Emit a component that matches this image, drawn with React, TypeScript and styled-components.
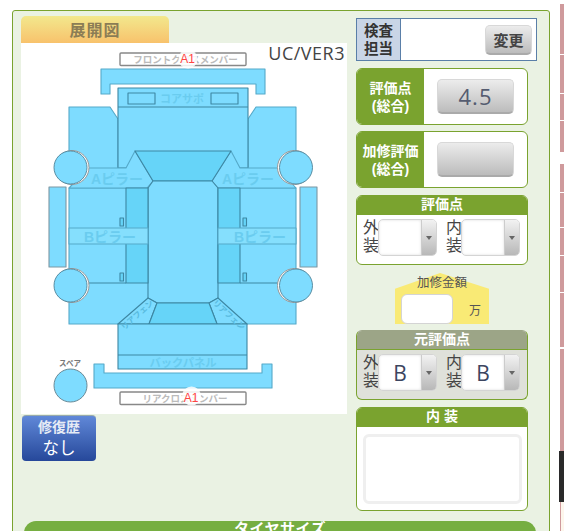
import React from 'react';
import styled, { createGlobalStyle } from 'styled-components';

const green = '#7aa32f';
const FONT = '"Liberation Sans", "Noto Sans CJK JP", sans-serif';

const GlobalStyle = createGlobalStyle`
  html, body {
    margin: 0;
    padding: 0;
    background: #fff;
    height: 531px;
    overflow: hidden;
    font-family: ${FONT};
  }
`;

const Page = styled.div`
  display: flex;
  align-items: flex-start;
  width: 564px;
  height: 531px;
  overflow: hidden;
  padding: 10px 0 0 12px;
  box-sizing: border-box;
`;

const Panel = styled.div`
  width: 538px;
  height: 560px;
  flex: none;
  box-sizing: border-box;
  border: 1px solid ${green};
  border-radius: 3px;
  background: #eaf2e3;
  padding: 5px 8px 0 8px;
`;

const Columns = styled.div`
  display: flex;
  gap: 9px;
`;

const LeftCol = styled.div`
  width: 326px;
  flex: none;
`;

const RightCol = styled.div`
  width: 172px;
  flex: none;
  display: flex;
  flex-direction: column;
  padding-top: 2px;
`;

const Tab = styled.div`
  width: 148px;
  height: 27px;
  border-radius: 5px 5px 0 0;
  background: linear-gradient(#f2e88d, #f8c26c);
  color: #8b7d55;
  font-weight: bold;
  font-size: 16px;
  letter-spacing: 1px;
  text-align: center;
  line-height: 29px;
`;

const Diagram = styled.div`
  position: relative;
  width: 326px;
  height: 371px;
  background: #fff;
`;

const Version = styled.span`
  position: absolute;
  top: 0;
  right: 2px;
  font-family: "Open Sans", sans-serif;
  font-size: 18px;
  letter-spacing: 0.5px;
  line-height: 20px;
  color: #444;
`;

const RepairButton = styled.div`
  width: 74px;
  height: 46px;
  margin: 1px 0 0 1px;
  border-radius: 4px;
  border-top: 1px solid #9aa;
  box-sizing: border-box;
  background: linear-gradient(#6088d8, #26489a);
  color: #fff;
  text-align: center;
  font-size: 16.5px;
  line-height: 20px;
  b { display: block; font-size: 14px; line-height: 22px; color: #e6ebf5; }
`;

const Inspector = styled.div`
  display: flex;
  height: 43px;
  width: 181px;
  box-sizing: border-box;
  border: 1px solid #5a7fa8;
  background: #fff;
`;

const InspectorLabel = styled.div`
  width: 44px;
  flex: none;
  background: #c9d5e6;
  border-right: 1px solid #5a7fa8;
  box-sizing: border-box;
  color: #333;
  font-weight: bold;
  font-size: 14.5px;
  line-height: 18px;
  text-align: center;
  padding-top: 3px;
`;

const InspectorBody = styled.div`
  flex: 1;
  display: flex;
  align-items: center;
  justify-content: flex-end;
  padding-right: 4px;
`;

const GreyButton = styled.div<{ $w: number; $h: number }>`
  width: ${(p) => p.$w}px;
  height: ${(p) => p.$h}px;
  box-sizing: border-box;
  border-radius: 5px;
  border: 1px solid #d8d8d8;
  border-bottom: 2px solid #aaa;
  background: linear-gradient(#ececec, #bcbcbc);
  display: flex;
  align-items: center;
  justify-content: center;
  color: #444;
`;

const ChangeLabel = styled.span`
  font-weight: bold;
  font-size: 15px;
`;

const ScoreValue = styled.span`
  font-family: "Open Sans", sans-serif;
  font-size: 22px;
  letter-spacing: 1px;
  color: #555c70;
`;

const ScoreCard = styled.div<{ $top: number }>`
  display: flex;
  height: 57px;
  margin-top: ${(p) => p.$top}px;
  box-sizing: border-box;
  border: 1px solid ${green};
  border-radius: 6px;
  background: #fff;
  overflow: hidden;
`;

const ScoreLabel = styled.div`
  width: 67px;
  flex: none;
  background: ${green};
  color: #fff;
  font-weight: bold;
  font-size: 14px;
  line-height: 18px;
  display: flex;
  align-items: center;
  justify-content: center;
  text-align: center;
  white-space: nowrap;
`;

const ScoreBody = styled.div`
  flex: 1;
  display: flex;
  justify-content: center;
  align-items: center;
`;

const Box = styled.div<{ $tone?: 'green' | 'grey'; $top: number }>`
  margin-top: ${(p) => p.$top}px;
  box-sizing: border-box;
  border: 1px solid ${green};
  border-top-color: ${(p) => (p.$tone === 'grey' ? '#9ca587' : green)};
  border-radius: 6px;
  background: ${(p) => (p.$tone === 'grey' ? '#dfe1da' : '#fff')};
  overflow: hidden;
`;

const BoxTitle = styled.div<{ $tone?: 'green' | 'grey' }>`
  height: 19px;
  box-sizing: border-box;
  background: ${(p) => (p.$tone === 'grey' ? '#9ca587' : green)};
  border-bottom: ${(p) => (p.$tone === 'grey' ? `1px solid ${green}` : 'none')};
  color: #fff;
  font-weight: bold;
  font-size: 14px;
  line-height: 17px;
  text-align: center;
`;

const SelectRow = styled.div`
  display: flex;
  gap: 9px;
  padding: 4px 8px 0 6px;
  height: 49px;
  box-sizing: border-box;
`;

const SelectGroup = styled.div`
  display: flex;
  flex: none;
  width: 74px;
`;

const SideLabel = styled.div`
  width: 15px;
  flex: none;
  font-size: 16px;
  line-height: 18px;
  color: #444;
  white-space: nowrap;
`;

const Select = styled.div`
  flex: 1;
  display: flex;
  height: 37px;
  box-sizing: border-box;
  border: 1px solid #d4d4d4;
  border-radius: 5px;
  background: #fff;
  overflow: hidden;
`;

const SelectValue = styled.div`
  flex: 1;
  display: flex;
  align-items: center;
  justify-content: center;
  font-family: "Open Sans", sans-serif;
  font-size: 21px;
  color: #3c4560;
  box-shadow: inset 0 0 3px #ddd;
`;

const SelectArrow = styled.div`
  width: 14px;
  flex: none;
  display: flex;
  align-items: center;
  justify-content: center;
  background: linear-gradient(#f2f2f2, #b8b8b8);
  border-left: 1px solid #ccc;
  &::after {
    content: '';
    border-left: 3.5px solid transparent;
    border-right: 3.5px solid transparent;
    border-top: 4px solid #666;
  }
`;

// the yellow house shape sits behind the title, which may stick out of it
const AmountBox = styled.div`
  position: relative;
  isolation: isolate;
  align-self: center;
  width: 94px;
  height: 51px;
  margin-top: 8px;
  box-sizing: border-box;
  padding: 0 6px;
  color: #555;
  &::before {
    content: '';
    position: absolute;
    inset: 0;
    z-index: -1;
    background: #f9ea75;
    clip-path: polygon(0 31%, 48% 0, 100% 31%, 100% 100%, 0 100%);
  }
`;

const AmountTitle = styled.div`
  font-size: 12.5px;
  line-height: 16px;
  text-align: center;
  padding-top: 2px;
  height: 21px;
  box-sizing: border-box;
  white-space: nowrap;
`;

const AmountRow = styled.div`
  display: flex;
  align-items: center;
  justify-content: space-between;
  font-size: 12px;
  padding-right: 2px;
`;

const AmountInput = styled.div`
  width: 52px;
  height: 30px;
  box-sizing: border-box;
  border: 1px solid #d4d4d4;
  border-radius: 6px;
  background: #fff;
`;

const NoteArea = styled.div`
  height: 70px;
  margin: 7px 5px 6px 6px;
  box-sizing: border-box;
  border: 3px solid #efefef;
  border-radius: 6px;
  background: #fff;
`;

const TireBar = styled.div`
  margin: 10px 0 0 3px;
  width: 512px;
  height: 30px;
  border-radius: 12px 12px 0 0;
  background: #76ae41;
  color: #fff;
  font-weight: bold;
  font-size: 15px;
  line-height: 16px;
  text-align: center;
  letter-spacing: 0.5px;
`;

const Strip = styled.div`
  width: 4px;
  margin-left: 10px;
  margin-top: -6px;
  flex: none;
  display: flex;
  flex-direction: column;
`;

const StripPiece = styled.div<{ $h: number; $gap?: number }>`
  height: ${(p) => p.$h}px;
  margin-bottom: ${(p) => p.$gap ?? 1}px;
  background: #cf9a9c;
`;

const StripDark = styled.div`
  height: 51px;
  width: 5px;
  margin-left: -1px;
  background: #2a2a2a;
`;

const StripEnd = styled.div`
  height: 40px;
  box-sizing: border-box;
  border-left: 1px solid #cf9a9c;
  background: #fdf6ec;
`;

const fill = '#7edcff';
const deep = '#66d4f8';
const pillar = '#85dffd';
const line = '#3d87a3';
const soft = '#55a9c9';
const faint = '#6accef';

// side = 1: the pale ring shows on the right, side = -1: on the left
function Wheel({ cx, cy, side }: { cx: number; cy: number; side: number }) {
  return (
    <>
      <circle cx={cx + side} cy={cy} r={17} fill="#fff" stroke="#999" strokeWidth={1} />
      <circle cx={cx - side * 0.5} cy={cy} r={16.5} fill={fill} stroke="#4f8398" strokeWidth={0.9} />
    </>
  );
}

function Label({ x, y, size, children, color = faint, rotate }: { x: number; y: number; size: number; children: string; color?: string; rotate?: number }) {
  return (
    <text
      x={x}
      y={y}
      fontSize={size}
      fill={color}
      textAnchor="middle"
      fontWeight="bold"
      fontFamily={FONT}
      transform={rotate ? `rotate(${rotate} ${x} ${y})` : undefined}
    >
      {children}
    </text>
  );
}

// coordinates are page pixels, the viewBox starts at the diagram origin (21, 43)
function CarDiagram() {
  return (
    <svg width={326} height={371} viewBox="21 43 326 371" style={{ display: 'block' }}>
      <g stroke={line} strokeWidth={1.1} strokeLinejoin="round">
        {/* bumpers */}
        <path d="M101 69H265V94H256V84H110V94H101Z" fill={fill} stroke={soft} />
        <path d="M94 364H104V373H262V364H272V388H94Z" fill={fill} stroke={soft} />

        {/* fenders and body */}
        <path d="M69 107H110L118 119V170H69Z" fill={fill} stroke={soft} />
        <path d="M296 107H256L248 119V170H296Z" fill={fill} stroke={soft} />
        <path d="M69 188H296V324H69Z" fill={fill} stroke={soft} />

        {/* hood */}
        <path d="M118 88H248V168H118Z" fill={fill} />
        <path d="M118 107H248" fill="none" />
        <rect x="128" y="93" width="27" height="11" fill={fill} />
        <rect x="211" y="93" width="27" height="11" fill={fill} />

        {/* A pillars */}
        <path d="M88 168H126L135 151L153 181L147 188H69Z" fill={fill} stroke={soft} />
        <path d="M278 168H240L231 151L212 181L218 188H296Z" fill={fill} stroke={soft} />

        {/* windscreen, roof */}
        <path d="M135 151H231L212 181H153Z" fill={deep} />
        <path d="M153 181H212L218 188V298L209 303H157L148 298V188Z" fill={fill} />

        {/* doors */}
        <path d="M126 188H148V283H126Z" fill={deep} />
        <path d="M218 188H240V283H218Z" fill={deep} />
        <path d="M69 283H126" fill="none" />
        <path d="M240 283H296" fill="none" />
        <rect x="69" y="228" width="79" height="16" fill={pillar} stroke={soft} />
        <rect x="218" y="228" width="78" height="16" fill={pillar} stroke={soft} />
        <rect x="120" y="218" width="3.5" height="8" fill={deep} />
        <rect x="120" y="273" width="3.5" height="8" fill={deep} />
        <rect x="243" y="218" width="3.5" height="8" fill={deep} />
        <rect x="243" y="273" width="3.5" height="8" fill={deep} />

        {/* sills */}
        <rect x="49" y="187" width="17" height="80" fill={fill} stroke="#7d97a3" />
        <rect x="300" y="187" width="17" height="80" fill={fill} stroke="#7d97a3" />

        {/* rear deck */}
        <path d="M148 298L157 303L149 324H118Z" fill={fill} />
        <path d="M218 298L209 303L217 324H247Z" fill={fill} />
        <path d="M157 303H209L217 324H149Z" fill={deep} />
        <path d="M118 324H247V369H118Z" fill={fill} />
        <path d="M118 355H247" fill="none" />

        {/* wheels */}
        <Wheel cx={71} cy={167.5} side={1} />
        <Wheel cx={295.5} cy={167.5} side={-1} />
        <Wheel cx={71} cy={285.5} side={1} />
        <Wheel cx={295.5} cy={285.5} side={-1} />
        <circle cx={70.5} cy={385.5} r={16.5} fill={fill} stroke="#6b8a96" strokeWidth={1} />
      </g>

      <Label x={182} y={103} size={11}>コアサポ</Label>
      <Label x={117} y={184} size={14}>Aピラー</Label>
      <Label x={248} y={184} size={14}>Aピラー</Label>
      <Label x={110} y={242} size={14}>Bピラー</Label>
      <Label x={260} y={242} size={14}>Bピラー</Label>
      <Label x={183} y={367} size={11.3}>バックパネル</Label>
      <Label x={139} y={317} size={8} rotate={-42} color="#58bade">リアフェン</Label>
      <Label x={227} y={317} size={8} rotate={42} color="#58bade">リアフェン</Label>
      <Label x={70} y={366} size={7.5} color="#777">スペア</Label>

      {/* cross members */}
      <rect x="120" y="53" width="126" height="12.5" fill="#fff" stroke="#888" strokeWidth={1.4} rx={1} />
      <Label x={185.5} y={63} size={9.5} color="#bbb">フロントクロスメンバー</Label>
      <rect x="120" y="392" width="126" height="12.5" fill="#fff" stroke="#888" strokeWidth={1.4} rx={1} />
      <Label x={185} y={402} size={9.5} color="#bbb">リアクロスメンバー</Label>

      {/* damage marks */}
      <circle cx={188} cy={59} r={9.5} fill="#fff" fillOpacity={0.85} />
      <text x={187.5} y={63} fontSize={12} fill="#f44" textAnchor="middle" fontFamily={FONT}>A1</text>
      <circle cx={191.5} cy={396} r={9.5} fill="#fff" fillOpacity={0.85} />
      <text x={191} y={402} fontSize={12} fill="#f44" textAnchor="middle" fontFamily={FONT}>A1</text>
    </svg>
  );
}

export default function App() {
  return (
    <Page>
      <GlobalStyle />
      <Panel>
        <Columns>
          <LeftCol>
            <Tab>展開図</Tab>
            <Diagram>
              <CarDiagram />
              <Version>UC/VER3</Version>
            </Diagram>
            <RepairButton>
              <b>修復歴</b>
              なし
            </RepairButton>
          </LeftCol>
          <RightCol>
            <Inspector>
              <InspectorLabel>検査<br />担当</InspectorLabel>
              <InspectorBody>
                <GreyButton $w={47} $h={30}><ChangeLabel>変更</ChangeLabel></GreyButton>
              </InspectorBody>
            </Inspector>
            <ScoreCard $top={7}>
              <ScoreLabel>評価点<br />(総合)</ScoreLabel>
              <ScoreBody><GreyButton $w={77} $h={35}><ScoreValue>4.5</ScoreValue></GreyButton></ScoreBody>
            </ScoreCard>
            <ScoreCard $top={6}>
              <ScoreLabel>加修評価<br />(総合)</ScoreLabel>
              <ScoreBody><GreyButton $w={77} $h={35} /></ScoreBody>
            </ScoreCard>
            <Box $top={7}>
              <BoxTitle>評価点</BoxTitle>
              <SelectRow>
                <SelectGroup>
                  <SideLabel>外<br />装</SideLabel>
                  <Select><SelectValue /><SelectArrow /></Select>
                </SelectGroup>
                <SelectGroup>
                  <SideLabel>内<br />装</SideLabel>
                  <Select><SelectValue /><SelectArrow /></Select>
                </SelectGroup>
              </SelectRow>
            </Box>
            <AmountBox>
              <AmountTitle>加修金額</AmountTitle>
              <AmountRow>
                <AmountInput />
                万
              </AmountRow>
            </AmountBox>
            <Box $tone="grey" $top={6}>
              <BoxTitle $tone="grey">元評価点</BoxTitle>
              <SelectRow>
                <SelectGroup>
                  <SideLabel>外<br />装</SideLabel>
                  <Select><SelectValue>B</SelectValue><SelectArrow /></Select>
                </SelectGroup>
                <SelectGroup>
                  <SideLabel>内<br />装</SideLabel>
                  <Select><SelectValue>B</SelectValue><SelectArrow /></Select>
                </SelectGroup>
              </SelectRow>
            </Box>
            <Box $top={7}>
              <BoxTitle>内 装</BoxTitle>
              <NoteArea />
            </Box>
          </RightCol>
        </Columns>
        <TireBar>タイヤサイズ</TireBar>
      </Panel>
      <Strip>
        <StripPiece $h={50} />
        <StripPiece $h={38} />
        <StripPiece $h={26} />
        <StripPiece $h={31} $gap={12} />
        <StripPiece $h={28} />
        <StripPiece $h={34} />
        <StripPiece $h={27} />
        <StripPiece $h={36} />
        <StripPiece $h={54} $gap={2} />
        <StripPiece $h={102} $gap={0} />
        <StripDark />
        <StripEnd />
      </Strip>
    </Page>
  );
}
